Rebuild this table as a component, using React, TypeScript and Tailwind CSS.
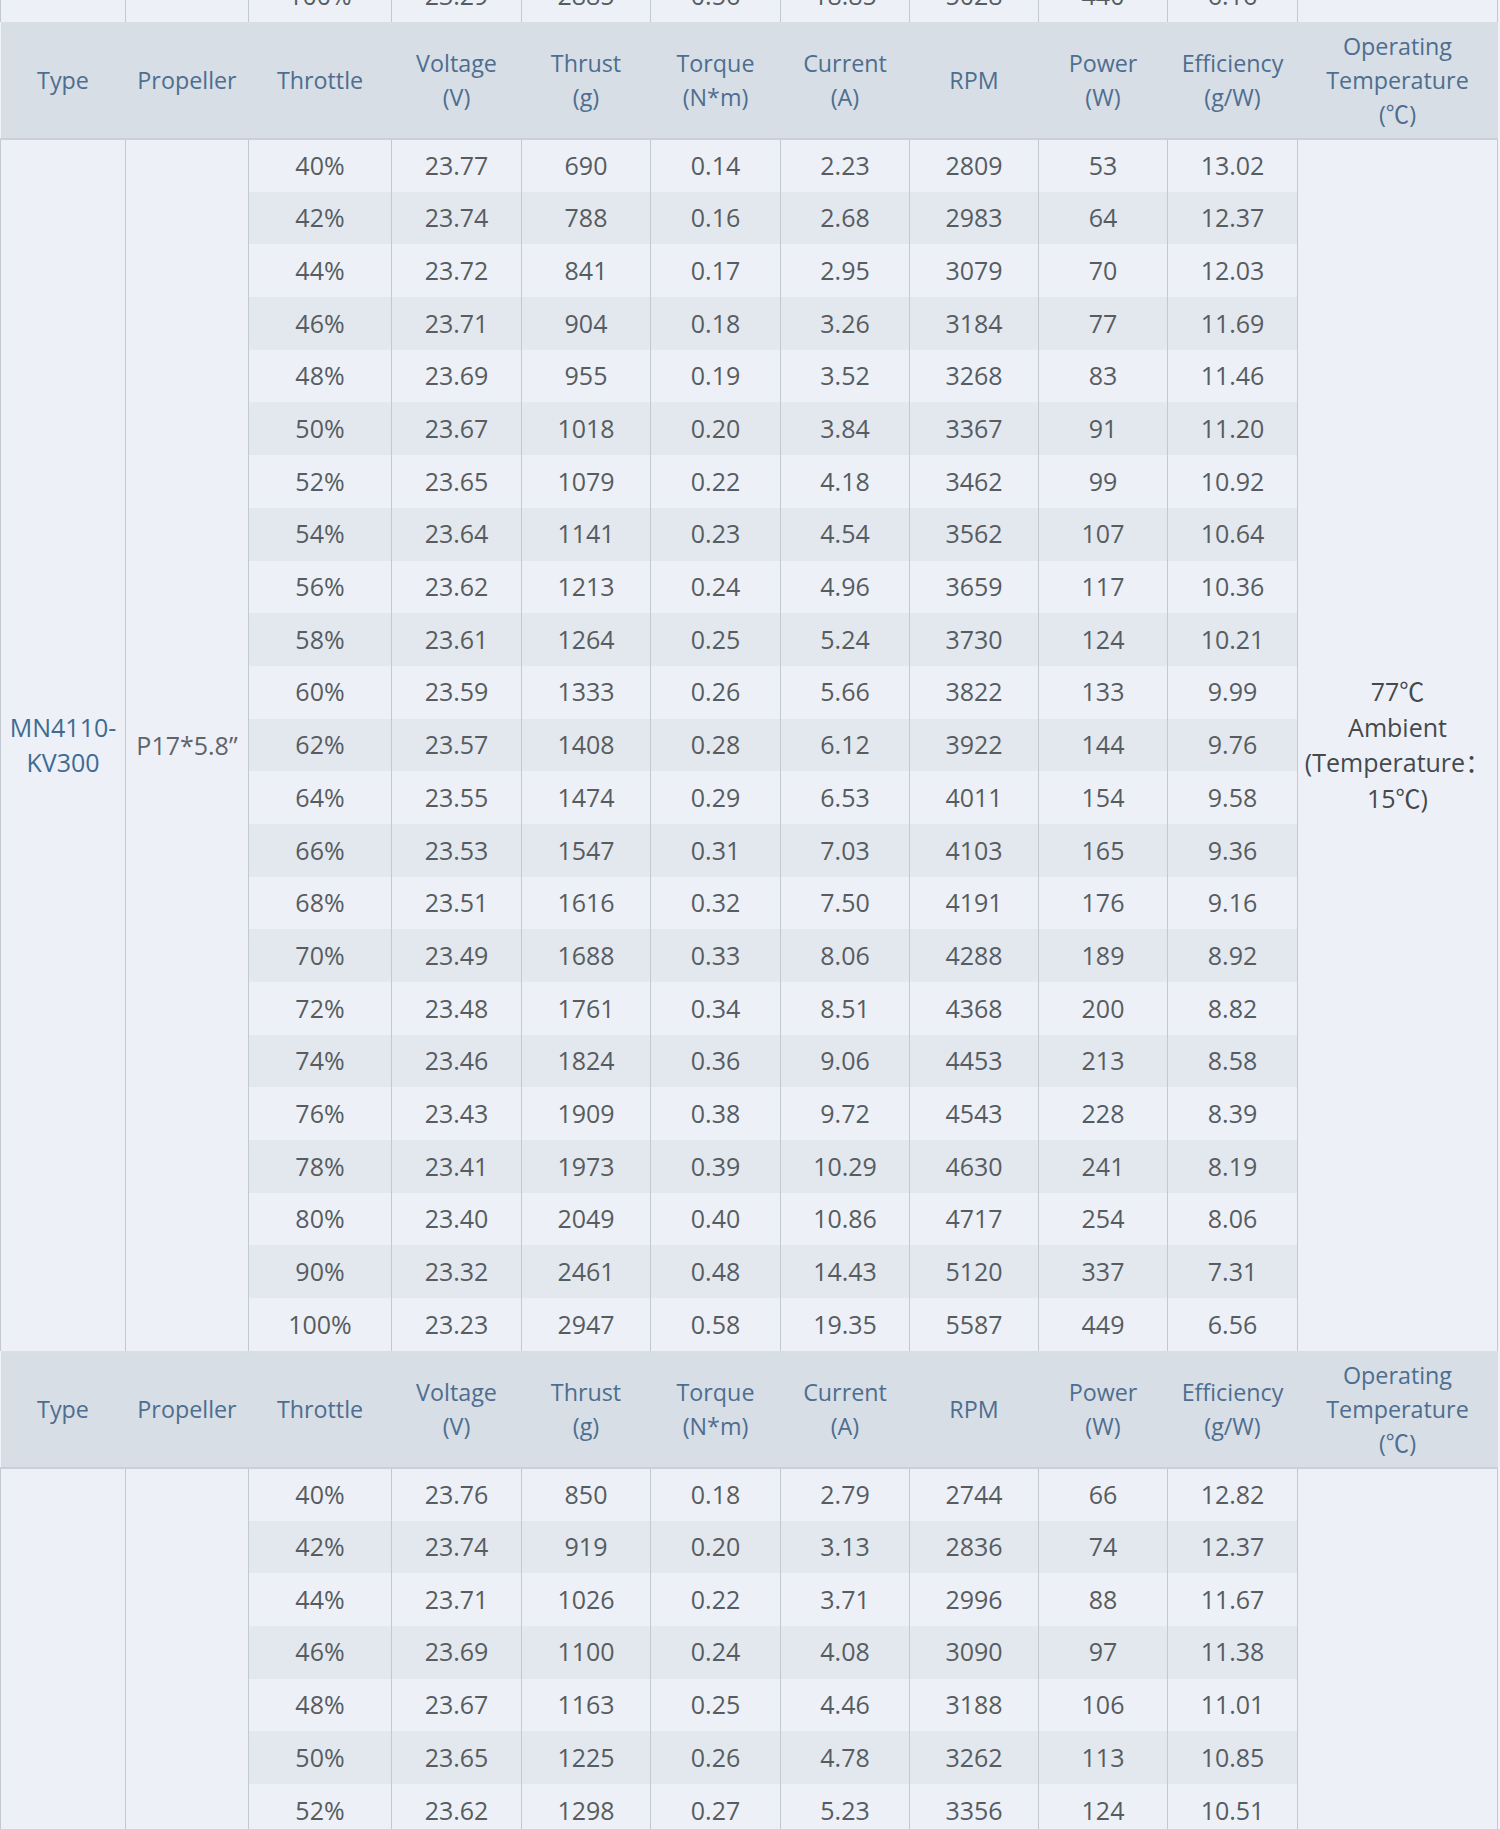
const columns = [
  { label: ['Type'], width: 'w-[125px]' },
  { label: ['Propeller'], width: 'w-[123px]' },
  { label: ['Throttle'], width: 'w-[143px]' },
  { label: ['Voltage', '(V)'], width: 'w-[130px]' },
  { label: ['Thrust', '(g)'], width: 'w-[129px]' },
  { label: ['Torque', '(N*m)'], width: 'w-[130px]' },
  { label: ['Current', '(A)'], width: 'w-[129px]' },
  { label: ['RPM'], width: 'w-[129px]' },
  { label: ['Power', '(W)'], width: 'w-[129px]' },
  { label: ['Efficiency', '(g/W)'], width: 'w-[130px]' },
  { label: ['Operating', 'Temperature', '(℃)'], width: 'w-[200px]' },
];

const blockOne: string[][] = [
  ['40%', '23.77', '690', '0.14', '2.23', '2809', '53', '13.02'],
  ['42%', '23.74', '788', '0.16', '2.68', '2983', '64', '12.37'],
  ['44%', '23.72', '841', '0.17', '2.95', '3079', '70', '12.03'],
  ['46%', '23.71', '904', '0.18', '3.26', '3184', '77', '11.69'],
  ['48%', '23.69', '955', '0.19', '3.52', '3268', '83', '11.46'],
  ['50%', '23.67', '1018', '0.20', '3.84', '3367', '91', '11.20'],
  ['52%', '23.65', '1079', '0.22', '4.18', '3462', '99', '10.92'],
  ['54%', '23.64', '1141', '0.23', '4.54', '3562', '107', '10.64'],
  ['56%', '23.62', '1213', '0.24', '4.96', '3659', '117', '10.36'],
  ['58%', '23.61', '1264', '0.25', '5.24', '3730', '124', '10.21'],
  ['60%', '23.59', '1333', '0.26', '5.66', '3822', '133', '9.99'],
  ['62%', '23.57', '1408', '0.28', '6.12', '3922', '144', '9.76'],
  ['64%', '23.55', '1474', '0.29', '6.53', '4011', '154', '9.58'],
  ['66%', '23.53', '1547', '0.31', '7.03', '4103', '165', '9.36'],
  ['68%', '23.51', '1616', '0.32', '7.50', '4191', '176', '9.16'],
  ['70%', '23.49', '1688', '0.33', '8.06', '4288', '189', '8.92'],
  ['72%', '23.48', '1761', '0.34', '8.51', '4368', '200', '8.82'],
  ['74%', '23.46', '1824', '0.36', '9.06', '4453', '213', '8.58'],
  ['76%', '23.43', '1909', '0.38', '9.72', '4543', '228', '8.39'],
  ['78%', '23.41', '1973', '0.39', '10.29', '4630', '241', '8.19'],
  ['80%', '23.40', '2049', '0.40', '10.86', '4717', '254', '8.06'],
  ['90%', '23.32', '2461', '0.48', '14.43', '5120', '337', '7.31'],
  ['100%', '23.23', '2947', '0.58', '19.35', '5587', '449', '6.56'],
];

const blockTwo: string[][] = [
  ['40%', '23.76', '850', '0.18', '2.79', '2744', '66', '12.82'],
  ['42%', '23.74', '919', '0.20', '3.13', '2836', '74', '12.37'],
  ['44%', '23.71', '1026', '0.22', '3.71', '2996', '88', '11.67'],
  ['46%', '23.69', '1100', '0.24', '4.08', '3090', '97', '11.38'],
  ['48%', '23.67', '1163', '0.25', '4.46', '3188', '106', '11.01'],
  ['50%', '23.65', '1225', '0.26', '4.78', '3262', '113', '10.85'],
  ['52%', '23.62', '1298', '0.27', '5.23', '3356', '124', '10.51'],
];

// last row of the table above, only its lower half is in view
const previousRow = ['100%', '23.29', '2885', '0.56', '18.85', '5028', '440', '6.16'];

const cell = 'border-x border-[#c3c9d1] text-center align-middle p-0 text-[25px]';

function HeaderRow() {
  return (
    <tr className="h-[117px] bg-[#d8dee5] border-b-2 border-[#c8d0d9]">
      {columns.map((col) => (
        <th key={col.label[0]} className="font-normal text-[#4d6e90] text-center align-middle leading-[34px] px-1">
          {col.label.map((line, i) => (
            <div key={i}>{line}</div>
          ))}
        </th>
      ))}
    </tr>
  );
}

function DataRows({ rows, type, propeller, temp }: { rows: string[][]; type?: string[]; propeller?: string; temp?: string[] }) {
  return (
    <>
      {rows.map((row, i) => (
        <tr key={row[0]} className="h-[52.7px]">
          {i === 0 && (
            <>
              <td rowSpan={rows.length} className={`${cell} bg-[#edf1f7] text-[#3e6b93] leading-[35px]`}>
                {type?.map((line) => <div key={line}>{line}</div>)}
              </td>
              <td rowSpan={rows.length} className={`${cell} bg-[#edf1f7] text-[#5f6469]`}>
                {propeller}
              </td>
            </>
          )}
          {row.map((value, j) => (
            <td key={j} className={`${cell} text-[#575c61] ${i % 2 === 0 ? 'bg-[#edf1f7]' : 'bg-[#e3e8ef]'}`}>
              {value}
            </td>
          ))}
          {i === 0 && (
            <td rowSpan={rows.length} className={`${cell} bg-[#edf1f7] text-[#45494d] leading-[35.5px]`}>
              {temp?.map((line) => <div key={line}>{line}</div>)}
            </td>
          )}
        </tr>
      ))}
    </>
  );
}

export default function App() {
  return (
    <div className="w-[1500px] h-[1829px] overflow-hidden bg-[#f0f3f8] font-['Open_Sans','Noto_Sans_CJK_SC',sans-serif] text-[23.3px]">
      <table className="table-fixed border-collapse w-[1497px] mt-[-30.7px]">
        <colgroup>
          {columns.map((col) => (
            <col key={col.label[0]} className={col.width} />
          ))}
        </colgroup>
        <tbody>
          <tr className="h-[52.7px]">
            <td className={`${cell} bg-[#edf1f7]`}></td>
            <td className={`${cell} bg-[#edf1f7]`}></td>
            {previousRow.map((value, j) => (
              <td key={j} className={`${cell} bg-[#edf1f7] text-[#575c61]`}>
                {value}
              </td>
            ))}
            <td className={`${cell} bg-[#edf1f7]`}></td>
          </tr>
          <HeaderRow />
          <DataRows
            rows={blockOne}
            type={['MN4110-', 'KV300']}
            propeller="P17*5.8”"
            temp={['77℃', 'Ambient', '(Temperature：', '15℃)']}
          />
          <HeaderRow />
          <DataRows rows={blockTwo} />
        </tbody>
      </table>
    </div>
  );
}
